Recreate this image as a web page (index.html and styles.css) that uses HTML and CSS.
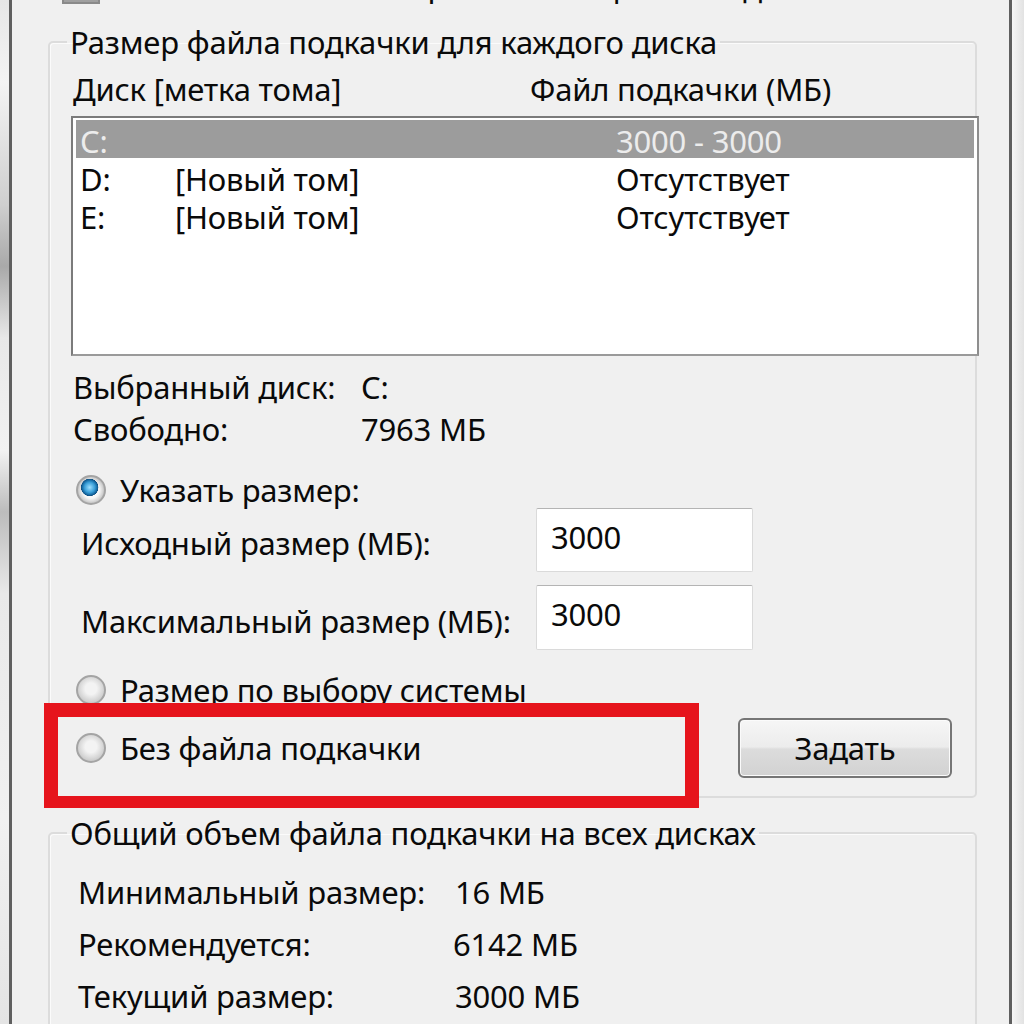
FILE: index.html
```html
<!DOCTYPE html>
<html lang="ru">
<head>
<meta charset="utf-8">
<title>Виртуальная память</title>
<link rel="stylesheet" href="styles.css">
</head>
<body>
<div class="frame-left"></div>
<div class="edge"></div>
<main class="dialog">
  <div class="top-strip"><span class="checkbox"></span><span class="top-label">Автоматически выбирать объем файла подкачки</span></div>

  <fieldset class="group group-drives">
    <legend>Размер файла подкачки для каждого диска</legend>
    <div class="list-head"><span class="col-disk">Диск [метка тома]</span><span class="col-file">Файл подкачки (МБ)</span></div>
    <div class="listbox">
      <div class="row selected"><span>C:</span><span></span><span>3000 - 3000</span></div>
      <div class="row"><span>D:</span><span>[Новый том]</span><span>Отсутствует</span></div>
      <div class="row"><span>E:</span><span>[Новый том]</span><span>Отсутствует</span></div>
    </div>
    <div class="info info-first"><span class="info-label">Выбранный диск:</span><span>C:</span></div>
    <div class="info"><span class="info-label">Свободно:</span><span>7963 МБ</span></div>
    <div class="radio-row r-custom"><span class="radio checked"></span><span>Указать размер:</span></div>
    <div class="field-row f-initial"><span class="field-label">Исходный размер (МБ):</span><span class="textbox">3000</span></div>
    <div class="field-row f-max"><span class="field-label">Максимальный размер (МБ):</span><span class="textbox">3000</span></div>
    <div class="radio-row r-system"><span class="radio"></span><span>Размер по выбору системы</span></div>
    <div class="action-row">
      <div class="radio-row r-none"><span class="radio"></span><span>Без файла подкачки</span></div>
      <button class="btn">Задать</button>
    </div>
  </fieldset>

  <fieldset class="group group-total">
    <legend>Общий объем файла подкачки на всех дисках</legend>
    <div class="total-row"><span class="total-label">Минимальный размер:</span><span>16 МБ</span></div>
    <div class="total-row"><span class="total-label">Рекомендуется:</span><span class="v-rec">6142 МБ</span></div>
    <div class="total-row"><span class="total-label">Текущий размер:</span><span>3000 МБ</span></div>
  </fieldset>

  <div class="highlight"></div>
</main>
<div class="edge"></div>
<div class="frame-right"></div>
</body>
</html>
```
FILE: styles.css
```css
* { box-sizing: border-box; }
html, body { margin: 0; padding: 0; }
body {
  width: 1024px;
  height: 1024px;
  overflow: hidden;
  display: flex;
  background: #f0f0f0;
  font-family: "Noto Sans", "Open Sans", sans-serif;
  font-size: 31px;
  color: #0a0a0a;
}
.frame-left {
  width: 9px;
  flex: none;
  background: linear-gradient(to bottom, #e6e6e6 0%, #f4f4f4 8%, #cfcfcf 20%, #a9a9a9 26%, #e8e8e8 33%, #f2f2f2 44%, #bcbcbc 50%, #e9e9e9 58%, #f1f1f1 80%, #e4e4e4 100%);
}
.edge {
  width: 3px;
  flex: none;
  background: #5f5f5f;
}
.frame-right {
  width: 12px;
  flex: none;
  background: linear-gradient(to right, #f6f6f6, #e2e2e2);
}
.dialog {
  flex: 1;
  position: relative;
  padding: 0 32px 0 36px;
  display: flex;
  flex-direction: column;
  background: #f0f0f0;
  letter-spacing: -0.2px;
}
.top-strip {
  height: 4px;
  flex: none;
  overflow: hidden;
  display: flex;
  align-items: flex-end;
  gap: 14px;
  padding-left: 14px;
}
.checkbox {
  flex: none;
  width: 38px;
  height: 38px;
  background: #a0a0a0;
  border: 2px solid #8a8a8a;
}
.top-label {
  flex: none;
  line-height: 30px;
  margin-bottom: 2px;
  white-space: nowrap;
}

.group {
  margin: 0;
  border: 2px solid #dcdcdc;
  border-radius: 5px;
  padding: 0 23px 0 21px;
  min-width: 0;
  box-shadow: inset 1px 1px 0 #fbfbfb;
}
.group legend {
  padding: 0 3px;
  margin-left: -4px;
  line-height: 36px;
}
.group-drives {
  flex: none;
  margin-top: 20px;
  padding-top: 10px;
  padding-bottom: 18px;
}
.list-head {
  display: flex;
  height: 38px;
  align-items: center;
  padding-left: 2px;
}
.col-disk { width: 457px; }

.listbox {
  margin-top: 8px;
  margin-right: -27px;
  height: 240px;
  background: #fff;
  border: 2px solid #7b7b7b;
  border-right-color: #8e8e8e;
  border-bottom-color: #9a9a9a;
  padding: 2px 3px;
}
.row {
  display: grid;
  grid-template-columns: 95px 441px 1fr;
  height: 38px;
  align-items: center;
  padding-left: 4px;
}
.row.selected {
  background: #9c9c9c;
  color: #ececec;
}

.info {
  display: flex;
  height: 38px;
  align-items: center;
  padding-left: 2px;
  margin-top: 4px;
}
.info-first { margin-top: 12px; }
.info-label { width: 288px; }

.radio-row {
  display: flex;
  align-items: center;
  height: 38px;
  gap: 14px;
  padding-left: 5px;
}
.r-custom { margin-top: 23px; }
.r-system { margin-top: 21px; }
.radio {
  flex: none;
  width: 30px;
  height: 30px;
  border-radius: 50%;
  border: 2px solid #a4a4a4;
  background: radial-gradient(circle at 50% 45%, #f3f3f3 0 30%, #dcdcdc 55%, #c9c9c9 75%, #ededed 80%);
}
.radio.checked {
  background:
    radial-gradient(circle at 45% 40%, #9fe0ff 0, #3a9fd8 24%, #14669f 36%, #0f4f80 40%, transparent 42%),
    radial-gradient(circle, #f8f8f8 0 45%, #c9c9c9 70%, #ededed 80%);
}

.field-row {
  display: flex;
  align-items: center;
  padding-left: 10px;
}
.f-initial { margin-top: -1px; height: 64px; }
.f-max { margin-top: 13px; height: 65px; }
.field-label {
  width: 455px;
  padding-top: 6px;
}
.textbox {
  width: 217px;
  height: 100%;
  background: #fff;
  border: 1px solid #dadada;
  border-top-color: #b4b4b4;
  border-radius: 2px;
  padding: 2px 0 0 14px;
  line-height: 52px;
  align-self: stretch;
}

.action-row {
  display: flex;
  align-items: center;
  justify-content: space-between;
  height: 60px;
  margin-top: 9px;
}
.btn {
  width: 214px;
  height: 60px;
  font: inherit;
  letter-spacing: inherit;
  color: #0a0a0a;
  border: 2px solid #767676;
  border-radius: 6px;
  background: linear-gradient(to bottom, #f6f6f6 0%, #ececec 48%, #dcdcdc 52%, #d2d2d2 100%);
  box-shadow: inset 0 0 0 1px #fbfbfb;
  padding: 0;
}

.group-total {
  margin-top: 17px;
  padding-top: 22px;
  padding-left: 28px;
  flex: none;
  height: 300px;
}
.group-total legend {
  margin-left: -11px;
}
.total-row {
  display: flex;
  align-items: center;
  height: 38px;
  margin-bottom: 14px;
}
.total-label { width: 377px; }
.v-rec { margin-left: -2px; }

.highlight {
  position: absolute;
  left: 32px;
  top: 703px;
  width: 655px;
  height: 105px;
  border: 14px solid #e6141c;
  border-bottom-width: 12px;
}
```
